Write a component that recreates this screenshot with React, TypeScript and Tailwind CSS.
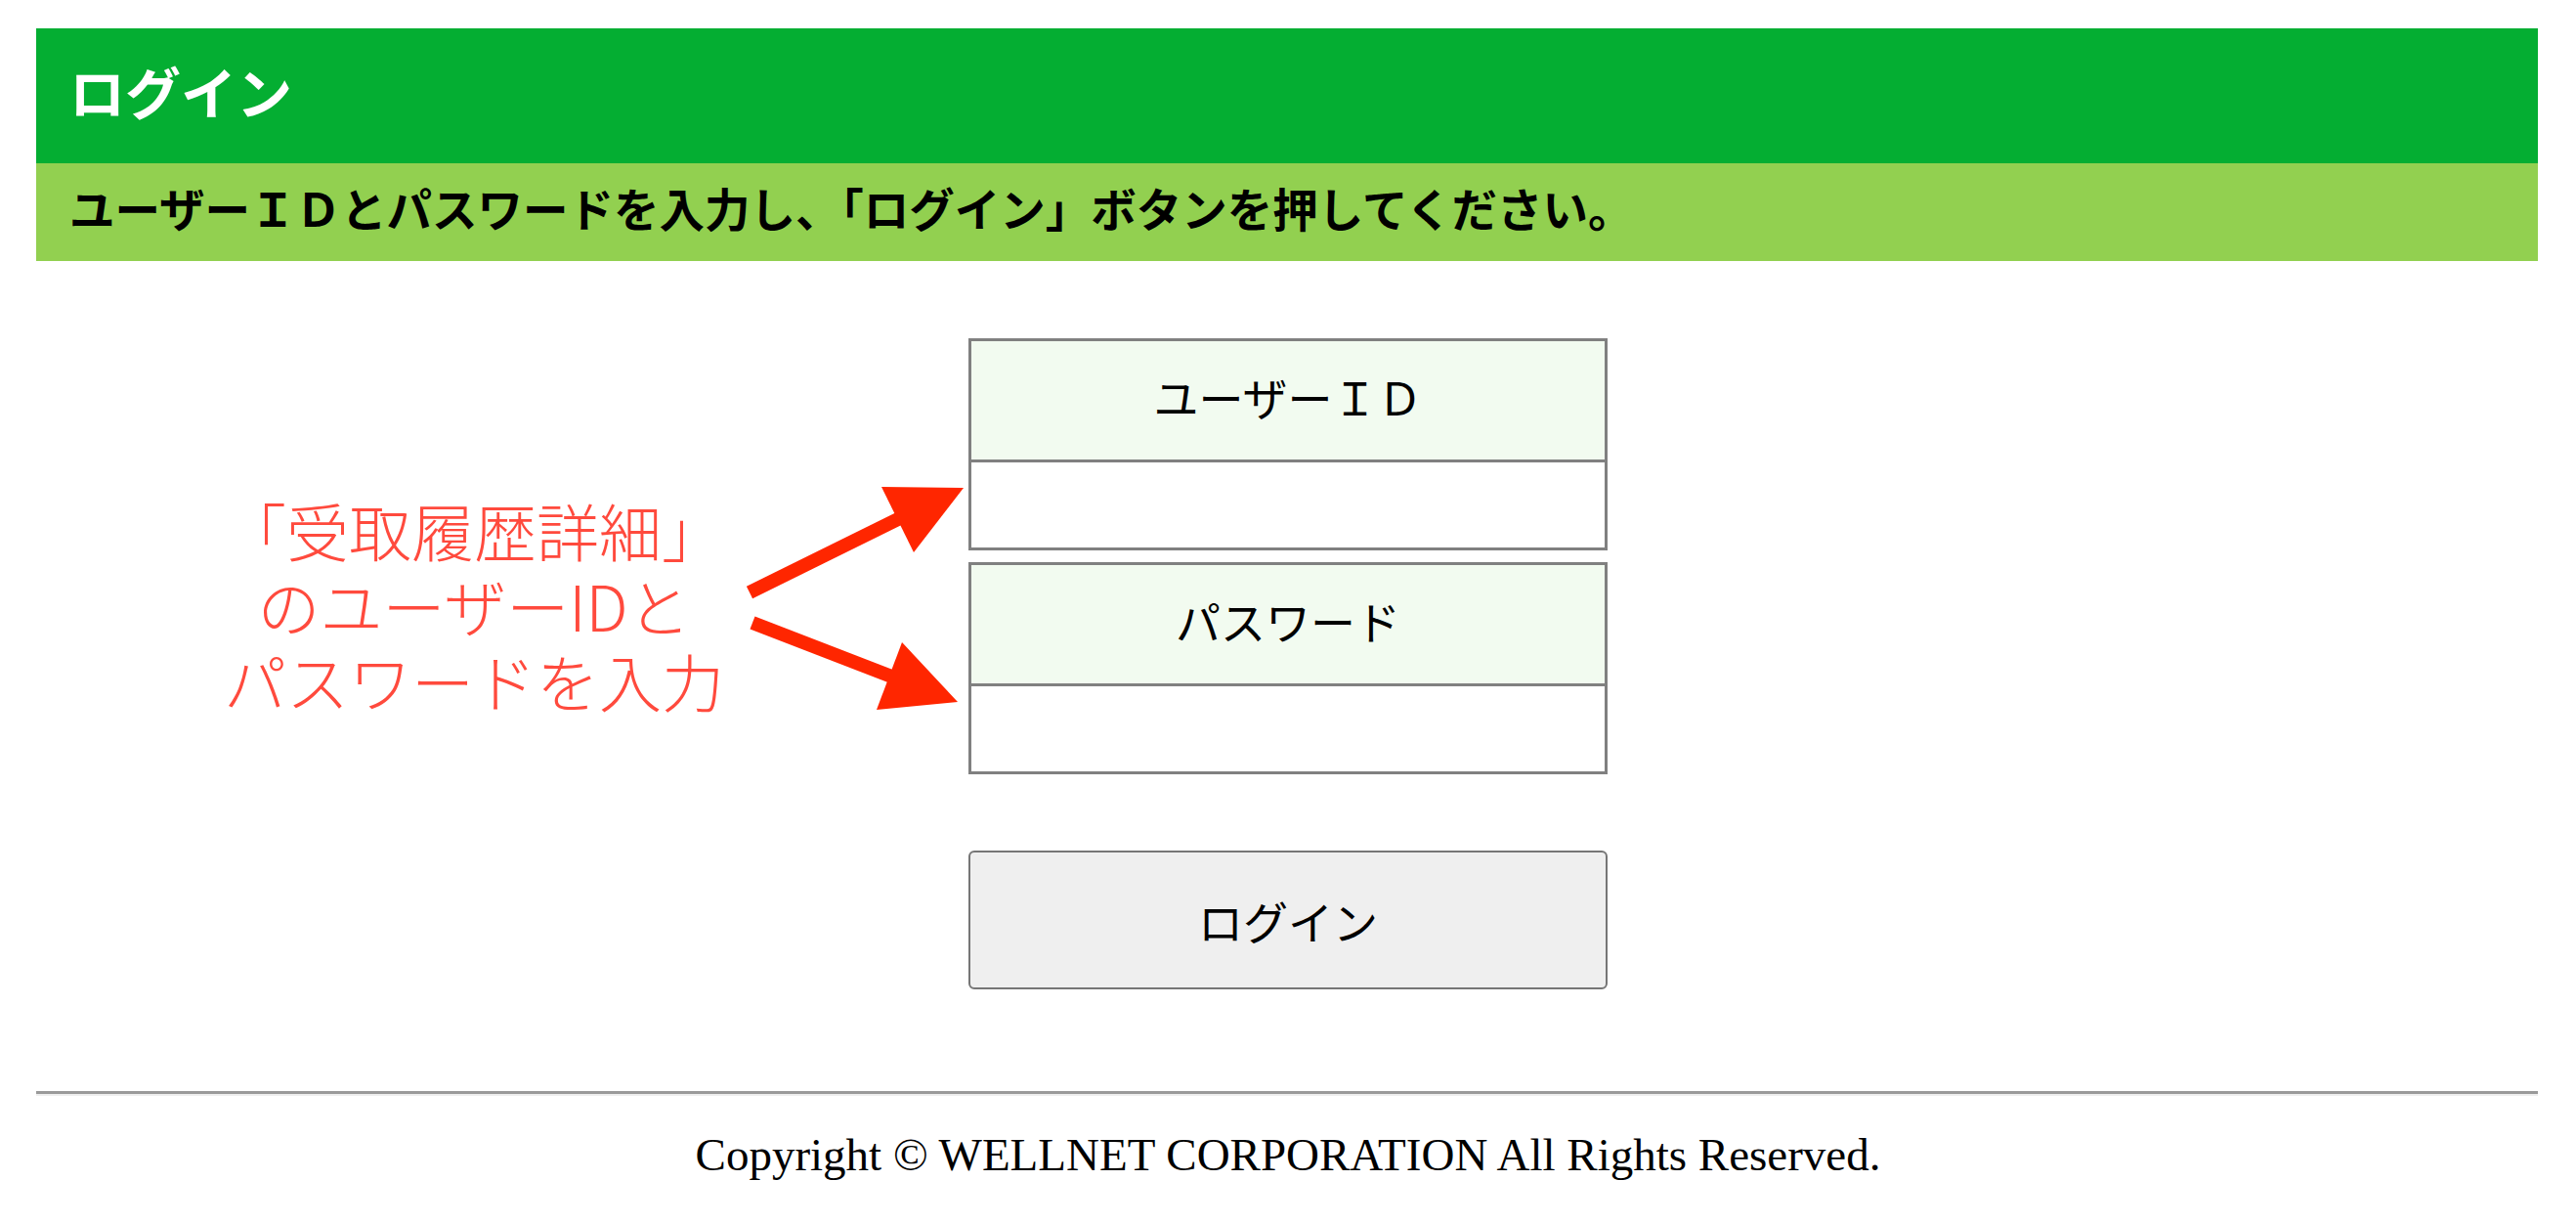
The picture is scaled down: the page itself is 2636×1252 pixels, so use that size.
import React from "react";

const jp = { fontFamily: '"Noto Sans CJK JP", "Noto Sans", sans-serif' };
const serifJp = { fontFamily: '"Liberation Serif", "Noto Sans CJK JP", serif' };

function Field({ label }: { label: string }) {
  return (
    <div className="flex flex-col border-[3px] border-[#808080]">
      <div
        className="flex h-[121px] items-center justify-center bg-[#f2fbf0] text-[46px] text-black"
        style={serifJp}
      >
        {label}
      </div>
      <div className="h-[90px] border-t-[3px] border-[#808080] bg-white">
        <input className="h-full w-full bg-white px-4 text-[40px] outline-none" />
      </div>
    </div>
  );
}

export default function App() {
  return (
    <div className="relative min-h-[1252px] w-full bg-white pt-[29px]" style={jp}>
      <div className="ml-[37px] mr-[39px]">
        <div
          className="flex h-[138px] items-center bg-[#04ae32] pl-[34px] text-[57px] font-bold text-white"
          style={serifJp}
        >
          ログイン
        </div>
        <div
          className="flex h-[100px] items-center bg-[#92d050] pl-[34px] text-[46.5px] font-bold text-black"
          style={serifJp}
        >
          ユーザーＩＤとパスワードを入力し、「ログイン」ボタンを押してください。
        </div>
      </div>

      <div className="mx-auto mt-[79px] flex w-[654px] flex-col gap-[12px]">
        <Field label="ユーザーＩＤ" />
        <Field label="パスワード" />
      </div>

      <div className="mx-auto mt-[78px] w-[654px]">
        <button
          className="flex h-[142px] w-full items-center justify-center rounded-[6px] border-2 border-[#767676] bg-[#efefef] text-[46px] text-black"
          style={jp}
        >
          ログイン
        </button>
      </div>

      <div className="ml-[37px] mr-[39px] mt-[104px] border-t-[3px] border-b-2 border-t-[#9a9a9a] border-b-[#eeeeee]" />

      <div
        className="mt-[33px] text-center text-[47px] leading-[54px] text-black"
        style={{ fontFamily: '"Liberation Serif", "Times New Roman", serif' }}
      >
        Copyright © WELLNET CORPORATION All Rights Reserved.
      </div>

      {/* annotation overlay */}
      <div
        className="absolute left-[185px] top-[503px] flex w-[600px] flex-col text-center text-[64px] font-light leading-[77px] text-[#ff4a3d]"
        style={jp}
      >
        <span>「受取履歴詳細」</span>
        <span>のユーザーIDと</span>
        <span>パスワードを入力</span>
      </div>

      <svg
        className="pointer-events-none absolute left-0 top-0"
        width="2636"
        height="1252"
        viewBox="0 0 2636 1252"
      >
        <line x1="767" y1="606" x2="925" y2="528" stroke="#ff2600" strokeWidth="14" />
        <polygon points="986,499 902,498 935,565" fill="#ff2600" />
        <line x1="770" y1="637" x2="915" y2="693" stroke="#ff2600" strokeWidth="14" />
        <polygon points="980,718 923,657 897,726" fill="#ff2600" />
      </svg>
    </div>
  );
}
